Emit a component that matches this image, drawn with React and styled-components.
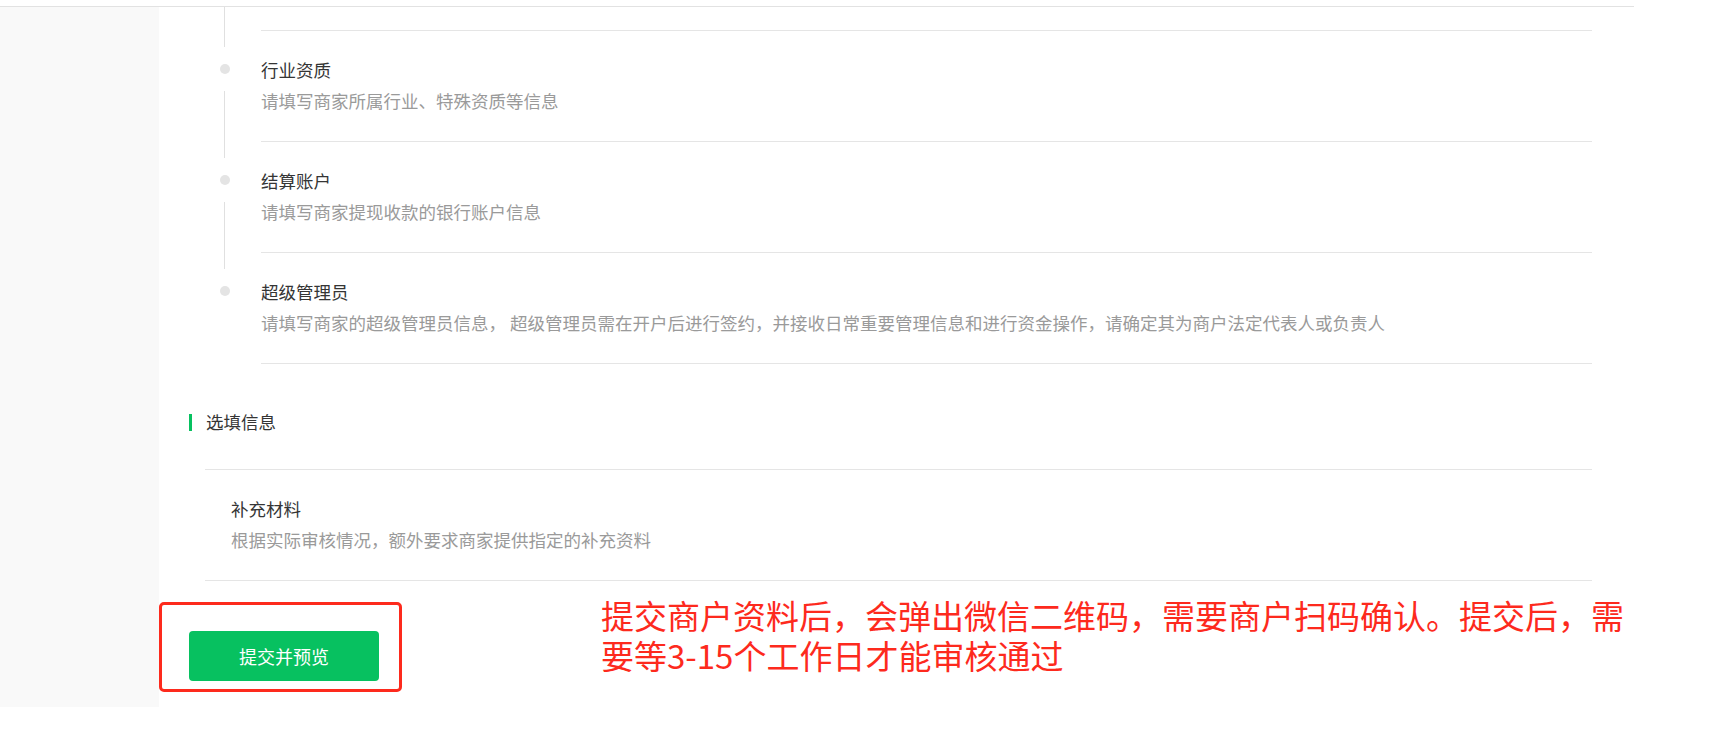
import React from 'react';
import styled, { createGlobalStyle } from 'styled-components';

const GlobalStyle = createGlobalStyle`
  html, body {
    margin: 0;
    padding: 0;
    background: #fff;
  }
  body {
    font-family: "Noto Sans CJK SC", "Noto Sans", "Liberation Sans", sans-serif;
    color: #353535;
  }
`;

const Page = styled.div`
  width: 1634px;
`;

const TopBar = styled.div`
  height: 6px;
  border-bottom: 1px solid #e2e2e2;
`;

const Body = styled.div`
  display: flex;
`;

const Sidebar = styled.div`
  width: 159px;
  flex-shrink: 0;
  background: #f9f9f9;
`;

const Main = styled.div`
  flex: 1;
  min-width: 0;
  padding-right: 42px;
  padding-bottom: 15px;
`;

const Timeline = styled.div`
  display: flex;
  padding-left: 30px;
`;

const Rail = styled.div`
  width: 72px;
  flex-shrink: 0;
  display: flex;
  flex-direction: column;
`;

const RailLine = styled.div`
  width: 1px;
  height: ${(p) => p.h}px;
  margin-left: 35px;
  background: #e0e0e0;
`;

const DotBox = styled.div`
  height: 44px;
  display: flex;
  align-items: center;
  padding-left: 31px;
  box-sizing: border-box;
`;

const Dot = styled.span`
  width: 10px;
  height: 10px;
  border-radius: 50%;
  background: #e4e4e4;
`;

const Steps = styled.div`
  flex: 1;
`;

const Tail = styled.div`
  height: 23px;
  border-bottom: 1px solid #e5e5e5;
`;

const Item = styled.div`
  padding: 27px 0 28px ${(p) => p.indent || 0}px;
  border-bottom: 1px solid #e5e5e5;
`;

const Title = styled.div`
  font-size: 17.5px;
  line-height: 24px;
  color: #353535;
`;

const Desc = styled.div`
  margin-top: 7px;
  font-size: 17.5px;
  line-height: 24px;
  color: #9a9a9a;
`;

const SectionHead = styled.div`
  display: flex;
  align-items: center;
  gap: 14px;
  margin: 46px 0 35px 30px;
  font-size: 17.5px;
  line-height: 24px;
  color: #353535;
  &::before {
    content: "";
    width: 3px;
    height: 17px;
    background: #07c160;
  }
`;

const OptionalList = styled.div`
  margin-left: 46px;
  border-top: 1px solid #e5e5e5;
`;

const Footer = styled.div`
  display: flex;
  align-items: flex-start;
  padding-top: 14px;
`;

const Highlight = styled.div`
  flex-shrink: 0;
  margin-top: 7px;
  padding: 26px 20px 8px 27px;
  border: 3px solid #fd2a1d;
  border-radius: 5px;
`;

const SubmitButton = styled.button`
  width: 190px;
  height: 50px;
  border: none;
  border-radius: 4px;
  background: #07c160;
  color: #fff;
  font-family: inherit;
  font-size: 18px;
  display: block;
`;

const Note = styled.div`
  flex: none;
  margin-left: 199px;
  width: 1035px;
  font-size: 33px;
  line-height: 40px;
  color: #fd2a1d;
`;

const steps = [
  { title: '行业资质', desc: '请填写商家所属行业、特殊资质等信息' },
  { title: '结算账户', desc: '请填写商家提现收款的银行账户信息' },
  {
    title: '超级管理员',
    desc: '请填写商家的超级管理员信息， 超级管理员需在开户后进行签约，并接收日常重要管理信息和进行资金操作，请确定其为商户法定代表人或负责人',
  },
];

export default function App() {
  return (
    <Page>
      <GlobalStyle />
      <TopBar />
      <Body>
        <Sidebar />
        <Main>
          <Timeline>
            <Rail>
              <RailLine h={40} />
              {steps.map((s, i) => (
                <React.Fragment key={s.title}>
                  <DotBox>
                    <Dot />
                  </DotBox>
                  {i < steps.length - 1 && <RailLine h={67} />}
                </React.Fragment>
              ))}
            </Rail>
            <Steps>
              <Tail />
              {steps.map((s) => (
                <Item key={s.title}>
                  <Title>{s.title}</Title>
                  <Desc>{s.desc}</Desc>
                </Item>
              ))}
            </Steps>
          </Timeline>

          <SectionHead>选填信息</SectionHead>
          <OptionalList>
            <Item indent={26}>
              <Title>补充材料</Title>
              <Desc>根据实际审核情况，额外要求商家提供指定的补充资料</Desc>
            </Item>
          </OptionalList>

          <Footer>
            <Highlight>
              <SubmitButton>提交并预览</SubmitButton>
            </Highlight>
            <Note>提交商户资料后，会弹出微信二维码，需要商户扫码确认。提交后，需要等3-15个工作日才能审核通过</Note>
          </Footer>
        </Main>
      </Body>
    </Page>
  );
}
